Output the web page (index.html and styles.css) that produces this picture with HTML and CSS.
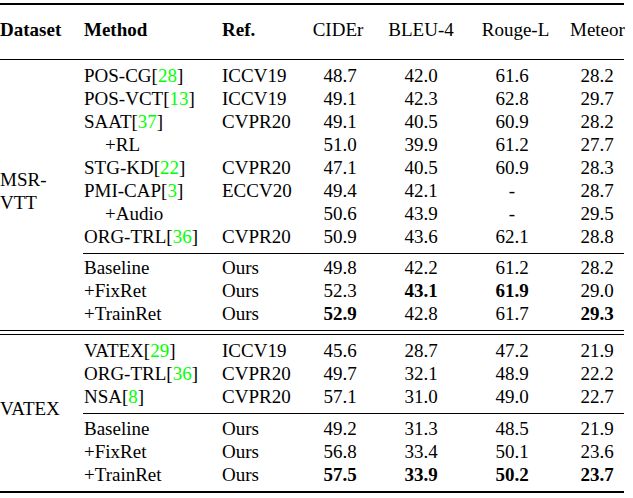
FILE: index.html
```html
<!DOCTYPE html>
<html>
<head>
<meta charset="utf-8">
<link rel="stylesheet" href="styles.css">
</head>
<body>
<div class="table">
  <div class="head">
    <div class="ds bold">Dataset</div>
    <div class="m bold">Method</div>
    <div class="r bold">Ref.</div>
    <div class="c1 h1">CIDEr</div>
    <div class="c2">BLEU-4</div>
    <div class="c3 h3">Rouge-L</div>
    <div class="c4">Meteor</div>
  </div>

  <div class="section msr">
    <div class="label">MSR-<br>VTT</div>
    <div class="groups">
      <div class="group first">
        <div class="row"><div class="m">POS-CG[<span class="cite">28</span>]</div><div class="r">ICCV19</div><div class="c1">48.7</div><div class="c2">42.0</div><div class="c3">61.6</div><div class="c4">28.2</div></div>
        <div class="row"><div class="m">POS-VCT[<span class="cite">13</span>]</div><div class="r">ICCV19</div><div class="c1">49.1</div><div class="c2">42.3</div><div class="c3">62.8</div><div class="c4">29.7</div></div>
        <div class="row"><div class="m">SAAT[<span class="cite">37</span>]</div><div class="r">CVPR20</div><div class="c1">49.1</div><div class="c2">40.5</div><div class="c3">60.9</div><div class="c4">28.2</div></div>
        <div class="row"><div class="m sub">+RL</div><div class="r"></div><div class="c1">51.0</div><div class="c2">39.9</div><div class="c3">61.2</div><div class="c4">27.7</div></div>
        <div class="row"><div class="m">STG-KD[<span class="cite">22</span>]</div><div class="r">CVPR20</div><div class="c1">47.1</div><div class="c2">40.5</div><div class="c3">60.9</div><div class="c4">28.3</div></div>
        <div class="row"><div class="m">PMI-CAP[<span class="cite">3</span>]</div><div class="r">ECCV20</div><div class="c1">49.4</div><div class="c2">42.1</div><div class="c3">-</div><div class="c4">28.7</div></div>
        <div class="row"><div class="m sub">+Audio</div><div class="r"></div><div class="c1">50.6</div><div class="c2">43.9</div><div class="c3">-</div><div class="c4">29.5</div></div>
        <div class="row"><div class="m">ORG-TRL[<span class="cite">36</span>]</div><div class="r">CVPR20</div><div class="c1">50.9</div><div class="c2">43.6</div><div class="c3">62.1</div><div class="c4">28.8</div></div>
      </div>
      <div class="group ours">
        <div class="row"><div class="m">Baseline</div><div class="r">Ours</div><div class="c1">49.8</div><div class="c2">42.2</div><div class="c3">61.2</div><div class="c4">28.2</div></div>
        <div class="row"><div class="m">+FixRet</div><div class="r">Ours</div><div class="c1">52.3</div><div class="c2 bold">43.1</div><div class="c3 bold">61.9</div><div class="c4">29.0</div></div>
        <div class="row"><div class="m">+TrainRet</div><div class="r">Ours</div><div class="c1 bold">52.9</div><div class="c2">42.8</div><div class="c3">61.7</div><div class="c4 bold">29.3</div></div>
      </div>
    </div>
  </div>

  <div class="section vatex">
    <div class="label">VATEX</div>
    <div class="groups">
      <div class="group first">
        <div class="row"><div class="m">VATEX[<span class="cite">29</span>]</div><div class="r">ICCV19</div><div class="c1">45.6</div><div class="c2">28.7</div><div class="c3">47.2</div><div class="c4">21.9</div></div>
        <div class="row"><div class="m">ORG-TRL[<span class="cite">36</span>]</div><div class="r">CVPR20</div><div class="c1">49.7</div><div class="c2">32.1</div><div class="c3">48.9</div><div class="c4">22.2</div></div>
        <div class="row"><div class="m">NSA[<span class="cite">8</span>]</div><div class="r">CVPR20</div><div class="c1">57.1</div><div class="c2">31.0</div><div class="c3">49.0</div><div class="c4">22.7</div></div>
      </div>
      <div class="group ours">
        <div class="row"><div class="m">Baseline</div><div class="r">Ours</div><div class="c1">49.2</div><div class="c2">31.3</div><div class="c3">48.5</div><div class="c4">21.9</div></div>
        <div class="row"><div class="m">+FixRet</div><div class="r">Ours</div><div class="c1">56.8</div><div class="c2">33.4</div><div class="c3">50.1</div><div class="c4">23.6</div></div>
        <div class="row"><div class="m">+TrainRet</div><div class="r">Ours</div><div class="c1 bold">57.5</div><div class="c2 bold">33.9</div><div class="c3 bold">50.2</div><div class="c4 bold">23.7</div></div>
      </div>
    </div>
  </div>
</div>
</body>
</html>
```

FILE: styles.css
```css
html, body {
  margin: 0;
  padding: 0;
  background: #fff;
}
body {
  font-family: "Liberation Serif", "Times New Roman", serif;
  font-size: 19px;
  line-height: 23px;
  color: #000;
}
.table {
  width: 624px;
  margin-top: 3px;
  border-top: 2px solid #000;
  border-bottom: 2px solid #000;
}
.head {
  display: grid;
  grid-template-columns: 83px 139px 82px 72px 90px 104px 54px;
  padding: 13px 0 18px;
  border-bottom: 1px solid #000;
}
.bold { font-weight: bold; }
.section {
  display: flex;
}
.label {
  width: 83px;
  flex: none;
  display: flex;
  align-items: center;
  padding-bottom: 9px;
  box-sizing: border-box;
}
.groups {
  flex: 1;
}
.msr {
  border-bottom: 1px solid #000;
}
.vatex {
  margin-top: 3px;
  border-top: 1px solid #000;
}
.msr .group.first { padding: 4px 0 5px; }
.msr .group.ours { padding: 2px 0 5px; }
.vatex .group.first { padding: 4px 0 5px; }
.vatex .group.ours { padding: 3px 0 5px; }
.group.ours {
  border-top: 1px solid #000;
}
.row {
  display: grid;
  grid-template-columns: 139px 82px 72px 90px 104px 54px;
  height: 23px;
}
.m { padding-left: 1px; white-space: nowrap; }
.m.sub { padding-left: 22px; }
.head .m { padding-left: 1px; }
.r { white-space: nowrap; }
.c1, .c2, .c3, .c4 { text-align: center; white-space: nowrap; }
.c3 { padding-right: 12px; }
.h1 { padding-right: 4px; }
.h3 { padding-left: 7px; }
.cite { color: #00ff00; }
```
